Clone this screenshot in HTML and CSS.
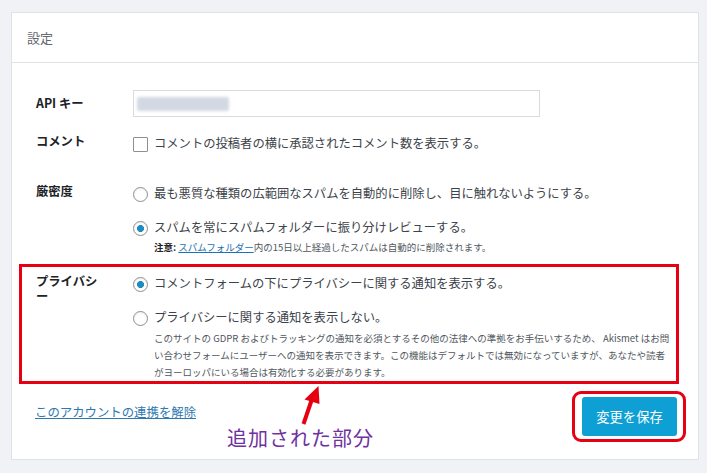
FILE: index.html
```html
<!DOCTYPE html>
<html lang="ja">
<head>
    <meta charset="UTF-8">
    <meta name="viewport" content="width=device-width, initial-scale=1.0">
    <title>設定</title>
    <link rel="stylesheet" href="styles.css">
</head>
<body>
    <div class="card">
        <div class="card-header">設定</div>

        <div class="card-body">
            <div class="row row-key">
                <div class="label">API キー</div>
                <div class="key-input"><span class="key-blur"></span></div>
            </div>

            <div class="row row-comment">
                <div class="label">コメント</div>
                <div class="options">
                    <label class="option"><input type="checkbox" class="check">コメントの投稿者の横に承認されたコメント数を表示する。</label>
                </div>
            </div>

            <div class="row row-strict">
                <div class="label">厳密度</div>
                <div class="options">
                    <label class="option"><input type="radio" name="strict" class="radio">最も悪質な種類の広範囲なスパムを自動的に削除し、目に触れないようにする。</label>
                    <div>
                        <label class="option"><input type="radio" name="strict" class="radio" checked>スパムを常にスパムフォルダーに振り分けレビューする。</label>
                        <p class="note"><strong>注意:</strong> <a href="#">スパムフォルダー</a>内の15日以上経過したスパムは自動的に削除されます。</p>
                    </div>
                </div>
            </div>

            <!-- 追加された部分 -->
            <div class="row row-privacy">
                <div class="label">プライバシー</div>
                <div class="options">
                    <label class="option"><input type="radio" name="privacy" class="radio" checked>コメントフォームの下にプライバシーに関する通知を表示する。</label>
                    <div>
                        <label class="option"><input type="radio" name="privacy" class="radio">プライバシーに関する通知を表示しない。</label>
                        <p class="desc">このサイトの GDPR およびトラッキングの通知を必須とするその他の法律への準拠をお手伝いするため、 Akismet はお問<br>い合わせフォームにユーザーへの通知を表示できます。この機能はデフォルトでは無効になっていますが、あなたや読者<br>がヨーロッパにいる場合は有効化する必要があります。</p>
                    </div>
                </div>
            </div>
        </div>

        <div class="card-footer">
            <a href="#" class="disconnect">このアカウントの連携を解除</a>
            <span class="save-mark"><button class="save">変更を保存</button></span>
        </div>

        <svg class="arrow" width="35" height="48" viewBox="290 380 35 48">
            <line x1="302.5" y1="423" x2="311" y2="398" stroke="#e60012" stroke-width="4"/>
            <polygon points="317.5,385 303.5,398.5 318.5,403" fill="#e60012"/>
        </svg>
        <div class="annotation">追加された部分</div>
    </div>
</body>
</html>
```

FILE: styles.css
```css
* {
    box-sizing: border-box;
}
body {
    margin: 0;
    background: #f0f2f5;
    font-family: "Noto Sans CJK JP", "Noto Sans", sans-serif;
    color: #3c434a;
}
.card {
    position: relative;
    margin: 12px 8px 0 11px;
    background: #fff;
    border: 1px solid #dfe3e8;
}
.card-header {
    height: 50px;
    line-height: 49px;
    padding: 0 15px;
    border-bottom: 1px solid #dfe3e8;
    font-size: 13px;
    color: #646970;
}
.card-body {
    padding-top: 27px;
}
.row {
    display: grid;
    grid-template-columns: 66px 1fr;
    column-gap: 31px;
    padding: 0 24px;
}
.label {
    font-size: 12.3px;
    font-weight: 700;
    line-height: 16px;
    color: #1d2327;
}
.row-key .label {
    line-height: 27px;
}
.key-input {
    display: flex;
    align-items: center;
    width: 407px;
    height: 27px;
    padding-left: 3px;
    border: 1px solid #d9dcdf;
}
.key-blur {
    width: 92px;
    height: 14px;
    background: #d3d9e3;
    border-radius: 2px;
    filter: blur(1.5px);
}
.row-comment {
    margin-top: 16px;
}
.row-strict {
    margin-top: 30px;
}
.options {
    display: flex;
    flex-direction: column;
    gap: 14px;
}
.option {
    display: flex;
    align-items: center;
    gap: 6px;
    font-size: 12.3px;
    line-height: 20px;
    white-space: nowrap;
}
.check,
.radio {
    appearance: none;
    -webkit-appearance: none;
    flex: none;
    width: 15px;
    height: 15px;
    margin: 2px 0 0 0;
    border: 1px solid #8c8f94;
    background: #fff;
}
.check {
    border-radius: 1px;
}
.radio {
    border-radius: 50%;
    box-shadow: inset 0 1px 2px rgba(0, 0, 0, 0.08);
}
.radio:checked {
    background: radial-gradient(circle, #1e8cbe 0 3.2px, #fff 3.8px);
}
.note {
    margin: 3px 0 0 21px;
    font-size: 9.5px;
    line-height: 14px;
    color: #50575e;
    white-space: nowrap;
}
.note strong {
    color: #1d2327;
}
.note a {
    color: #2271b1;
}
.row-privacy {
    margin: 10px 19px 0 7px;
    padding: 6px 0 0 14px;
    border: 3px solid #e60012;
}
.row-privacy .label {
    padding-top: 1px;
    line-height: 15px;
}
.desc {
    margin: 3px 0 0 21px;
    font-size: 9.5px;
    line-height: 17px;
    color: #50575e;
    white-space: nowrap;
}
.card-footer {
    display: flex;
    justify-content: space-between;
    align-items: flex-start;
    padding: 7px 12px 17px 23px;
}
.disconnect {
    margin-top: 11px;
    font-size: 12.4px;
    line-height: 20px;
    color: #2d78ae;
}
.save-mark {
    display: block;
    padding: 3px 6px 3px 7px;
    border: 3px solid #e60012;
    border-radius: 9px;
}
.save {
    display: block;
    width: 95px;
    height: 39px;
    border: none;
    border-radius: 3px;
    background: #0ea0d5;
    color: #fff;
    font-family: inherit;
    font-size: 13.3px;
    cursor: pointer;
}
.arrow {
    position: absolute;
    left: 279px;
    top: 368px;
}
.annotation {
    position: absolute;
    left: 215px;
    top: 413px;
    font-size: 20px;
    line-height: 24px;
    letter-spacing: 1px;
    color: #7030a0;
}
```
